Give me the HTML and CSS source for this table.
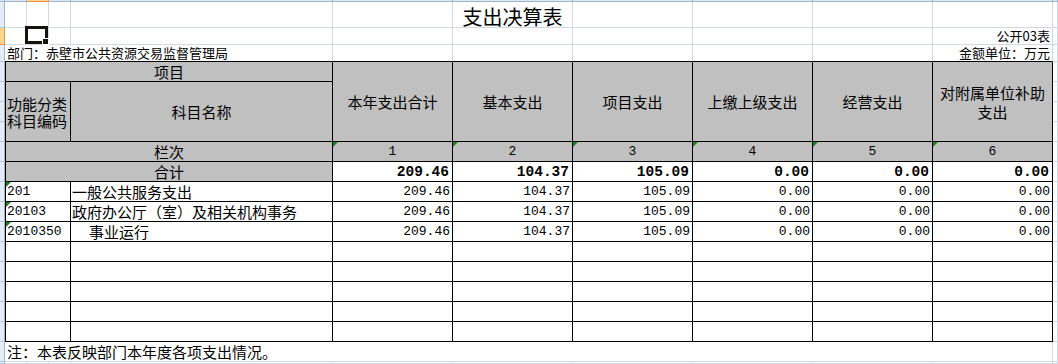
FILE: index.html
```html
<!DOCTYPE html>
<html lang="zh-CN">
<head>
<meta charset="utf-8">
<title>支出决算表</title>
<link rel="stylesheet" href="styles.css">
</head>
<body>
<div class="sheet">
  <!-- row 0: column header edge -->
  <div class="c hc"></div><div class="c hd"></div><div class="c hd hd-sel"></div><div class="c hd"></div><div class="c hd"></div><div class="c hd"></div><div class="c hd"></div><div class="c hd"></div><div class="c hd"></div><div class="c hd"></div><div class="c hd"></div><div class="c hd"></div>

  <!-- row 1: title -->
  <div class="c rh"></div><div class="c"></div><div class="c"></div><div class="c"></div><div class="c"></div><div class="c"></div>
  <div class="c title">支出决算表</div>
  <div class="c"></div><div class="c"></div><div class="c"></div><div class="c"></div><div class="c"></div>

  <!-- row 2 -->
  <div class="c rh rh-sel"></div><div class="c"></div>
  <div class="c selcell"><span class="selbox"><span class="handle"></span></span></div>
  <div class="c"></div><div class="c"></div><div class="c"></div><div class="c"></div><div class="c"></div><div class="c"></div><div class="c"></div>
  <div class="c meta right">公开03表</div>
  <div class="c"></div>

  <!-- row 3 -->
  <div class="c rh"></div>
  <div class="c s4 meta kb">部门：赤壁市公共资源交易监督管理局</div>
  <div class="c kb"></div><div class="c kb"></div><div class="c kb"></div><div class="c kb"></div><div class="c kb"></div>
  <div class="c meta right kb">金额单位：万元</div>
  <div class="c"></div>

  <!-- header row 1 -->
  <div class="c rh"></div>
  <div class="c s4 t g kl ctr top">项目</div>
  <div class="c t g r4 ctr hdr">本年支出合计</div>
  <div class="c t g r4 ctr hdr">基本支出</div>
  <div class="c t g r4 ctr hdr">项目支出</div>
  <div class="c t g r4 ctr hdr">上缴上级支出</div>
  <div class="c t g r4 ctr hdr">经营支出</div>
  <div class="c t g r4 ctr hdr">对附属单位补助支出</div>
  <div class="c"></div>

  <!-- header rows 2-4 -->
  <div class="c rh"></div>
  <div class="c s3 r3 t g kl code-h">功能分类<br>科目编码</div>
  <div class="c r3 t g ctr">科目名称</div>
  <div class="c"></div>
  <div class="c rh"></div><div class="c"></div>
  <div class="c rh"></div><div class="c"></div>

  <!-- 栏次 -->
  <div class="c rh"></div>
  <div class="c s4 t g kl ctr">栏次</div>
  <div class="c t g ctr num tri">1</div>
  <div class="c t g ctr num tri">2</div>
  <div class="c t g ctr num tri">3</div>
  <div class="c t g ctr num tri">4</div>
  <div class="c t g ctr num tri">5</div>
  <div class="c t g ctr num tri">6</div>
  <div class="c"></div>

  <!-- 合计 -->
  <div class="c rh"></div>
  <div class="c s4 t g kl ctr">合计</div>
  <div class="c t right bnum">209.46</div>
  <div class="c t right bnum">104.37</div>
  <div class="c t right bnum">105.09</div>
  <div class="c t right bnum">0.00</div>
  <div class="c t right bnum">0.00</div>
  <div class="c t right bnum">0.00</div>
  <div class="c"></div>

  <!-- data rows -->
  <div class="c rh"></div>
  <div class="c s3 t kl code tri">201</div>
  <div class="c t name">一般公共服务支出</div>
  <div class="c t right num">209.46</div>
  <div class="c t right num">104.37</div>
  <div class="c t right num">105.09</div>
  <div class="c t right num">0.00</div>
  <div class="c t right num">0.00</div>
  <div class="c t right num">0.00</div>
  <div class="c"></div>

  <div class="c rh"></div>
  <div class="c s3 t kl code tri">20103</div>
  <div class="c t name">政府办公厅（室）及相关机构事务</div>
  <div class="c t right num">209.46</div>
  <div class="c t right num">104.37</div>
  <div class="c t right num">105.09</div>
  <div class="c t right num">0.00</div>
  <div class="c t right num">0.00</div>
  <div class="c t right num">0.00</div>
  <div class="c"></div>

  <div class="c rh"></div>
  <div class="c s3 t kl code tri">2010350</div>
  <div class="c t name indent">事业运行</div>
  <div class="c t right num">209.46</div>
  <div class="c t right num">104.37</div>
  <div class="c t right num">105.09</div>
  <div class="c t right num">0.00</div>
  <div class="c t right num">0.00</div>
  <div class="c t right num">0.00</div>
  <div class="c"></div>

  <!-- empty rows -->
  <div class="c rh"></div><div class="c s3 t kl"></div><div class="c t"></div><div class="c t"></div><div class="c t"></div><div class="c t"></div><div class="c t"></div><div class="c t"></div><div class="c t"></div><div class="c"></div>
  <div class="c rh"></div><div class="c s3 t kl"></div><div class="c t"></div><div class="c t"></div><div class="c t"></div><div class="c t"></div><div class="c t"></div><div class="c t"></div><div class="c t"></div><div class="c"></div>
  <div class="c rh"></div><div class="c s3 t kl"></div><div class="c t"></div><div class="c t"></div><div class="c t"></div><div class="c t"></div><div class="c t"></div><div class="c t"></div><div class="c t"></div><div class="c"></div>
  <div class="c rh"></div><div class="c s3 t kl"></div><div class="c t"></div><div class="c t"></div><div class="c t"></div><div class="c t"></div><div class="c t"></div><div class="c t"></div><div class="c t"></div><div class="c"></div>
  <div class="c rh"></div><div class="c s3 t kl"></div><div class="c t"></div><div class="c t"></div><div class="c t"></div><div class="c t"></div><div class="c t"></div><div class="c t"></div><div class="c t"></div><div class="c"></div>

  <!-- note -->
  <div class="c rh"></div>
  <div class="c s10 note">注：本表反映部门本年度各项支出情况。</div>
  <div class="c"></div>

  <!-- bottom partial row -->
  <div class="c rh"></div><div class="c"></div><div class="c"></div><div class="c"></div><div class="c"></div><div class="c"></div><div class="c"></div><div class="c"></div><div class="c"></div><div class="c"></div><div class="c"></div><div class="c"></div>
</div>
</body>
</html>
```

FILE: styles.css
```css
html, body {
  margin: 0;
  padding: 0;
  background: #ffffff;
}

body {
  font-family: "Noto Sans CJK SC", "Noto Sans", sans-serif;
  color: #000000;
  width: 1058px;
  height: 364px;
  overflow: hidden;
}

.sheet {
  display: grid;
  grid-template-columns: 5px 22px 22px 22px 262px repeat(6, 120px) 5px;
  grid-template-rows: 2px 26px 17px 17px repeat(14, 20px) 20px 2px;
  width: 1058px;
  height: 364px;
}

.c {
  box-sizing: border-box;
  border-right: 1px solid #d0d7e5;
  border-bottom: 1px solid #d0d7e5;
  display: flex;
  align-items: center;
  min-width: 0;
  white-space: nowrap;
  font-size: 15px;
  line-height: 18px;
  position: relative;
}

/* column header edge */
.hc {
  background: #dfe7f2;
  border-right: 1px solid #9eb6ce;
  border-bottom: 1px solid #9eb6ce;
}
.hd {
  background: #dde6f2;
  border-right: 1px solid #9eb6ce;
  border-bottom: 1px solid #9eb6ce;
}
.hd-sel {
  background: #f8d596;
  border-bottom: 1px solid #f29436;
  border-right: 1px solid #f29436;
}

/* row header strip */
.rh {
  background: #e4ecf7;
  border-right: 1px solid #9eb6ce;
  border-bottom: 1px solid #b6c7dc;
}
.rh-sel {
  background: #ffd58d;
  border-right: 1px solid #f29436;
  border-bottom: 1px solid #f29436;
}

/* spans */
.s3 { grid-column: span 3; }
.s4 { grid-column: span 4; }
.s10 { grid-column: span 10; }
.r3 { grid-row: span 3; }
.r4 { grid-row: span 4; }

/* title + meta */
.title {
  overflow: visible;
  justify-content: center;
  align-items: flex-end;
  font-size: 20px;
  line-height: 21px;
}
.meta {
  font-size: 13px;
  line-height: 14px;
  align-items: flex-end;
  padding-left: 2px;
  padding-bottom: 1px;
  overflow: visible;
}
.right {
  justify-content: flex-end;
  padding-right: 2px;
}

/* selected cell */
.selbox {
  position: absolute;
  left: -2px;
  top: -2px;
  right: 0;
  bottom: 0;
  border: 3px solid #16120e;
  box-sizing: border-box;
}
.handle {
  position: absolute;
  right: -4px;
  bottom: -4px;
  width: 5px;
  height: 5px;
  background: #16120e;
  border: 1px solid #ffffff;
}

/* main table */
.t {
  border-right: 1px solid #000000;
  border-bottom: 1px solid #000000;
}
.kb {
  border-bottom: 1px solid #000000;
}
.kl {
  border-left: 1px solid #000000;
}
.g {
  background: #c0c0c0;
}
.ctr {
  justify-content: center;
  text-align: center;
}
.top {
  padding-top: 1px;
}
.hdr {
  white-space: normal;
  padding: 0 4px;
  line-height: 19px;
}
.code-h {
  white-space: normal;
  padding-left: 1px;
  padding-top: 1px;
  line-height: 17px;
}
.code {
  font-family: "Liberation Mono", monospace;
  font-size: 13px;
  padding-left: 1px;
}
.name {
  padding-left: 1px;
}
.indent {
  padding-left: 18px;
}
.num {
  font-family: "Liberation Mono", monospace;
  font-size: 13px;
}
.bnum {
  font-family: "Liberation Mono", monospace;
  font-size: 14.5px;
  font-weight: bold;
  padding-right: 3px;
}
.tri::before {
  content: "";
  position: absolute;
  left: 0;
  top: 0;
  width: 0;
  height: 0;
  border-top: 5px solid #1b7f1b;
  border-right: 5px solid transparent;
}
.note {
  padding-left: 2px;
}
```
